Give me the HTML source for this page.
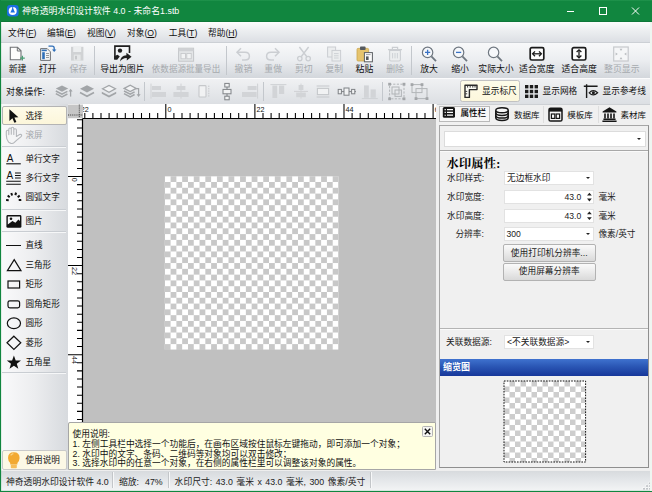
<!DOCTYPE html>
<html lang="zh-CN">
<head>
<meta charset="utf-8">
<title>神奇透明水印设计软件 4.0 - 未命名1.stb</title>
<style>
html,body{margin:0;padding:0;}
body{width:652px;height:492px;overflow:hidden;background:#f0f0f0;font-family:"Liberation Sans","Noto Sans CJK SC",sans-serif;color:#1a1a1a;position:relative;}
.abs{position:absolute;}
#win{position:absolute;left:0;top:0;width:652px;height:492px;overflow:hidden;background:#f0f0f0;}
#title{left:0;top:0;width:652px;height:22px;background:linear-gradient(#23964f 0,#11863f 1.5px,#11863f 20.5px,#0d7036 22px);}
#title .cap{left:22px;top:0;height:22px;line-height:22px;font-size:8.9px;color:#fff;white-space:nowrap;}
#menu{left:1px;top:22px;width:650px;height:20px;background:linear-gradient(#fcfcfc,#eceef0 45%,#dcdfe4);}
#menu span{position:absolute;top:0.7px;height:20px;line-height:21px;font-size:8.7px;white-space:nowrap;color:#111;}
#tb1{left:1px;top:42px;width:650px;height:36px;background:linear-gradient(#f8f9fa 0%,#ebedf0 50%,#d3d7dc 100%);border-top:1px solid #ccd0d5;box-sizing:border-box;}
#tb2{left:1px;top:78px;width:650px;height:26px;background:linear-gradient(#f0f1f3,#dcdfe3);border-top:1px solid #fbfbfc;box-sizing:border-box;}
.tl{position:absolute;top:64.4px;height:11px;line-height:11px;font-size:8.85px;white-space:nowrap;text-align:center;color:#111;transform:translateX(-50%);}
.tl.dis{color:#a6aaae;}
.tg{height:12px;line-height:12px;font-size:8.7px;white-space:nowrap;color:#111;}
.hl{left:3.6px;height:10px;line-height:10px;font-size:8.72px;white-space:nowrap;color:#111;}
.vsep{position:absolute;width:1px;background:#c3c7cc;}
#left{left:1px;top:104px;width:67px;height:366px;background:linear-gradient(90deg,#fafafb,#ecedef 50%,#d7dade);}
.li{position:absolute;left:25.4px;height:12px;line-height:12px;font-size:8.6px;white-space:nowrap;color:#111;}
.lsep{position:absolute;left:2px;width:64px;height:1px;background:#c9cdd2;border-bottom:1px solid #f6f7f8;}
#status{left:1px;top:470px;width:650px;height:21px;background:linear-gradient(#eeeeee 0,#eeeeee 1px,#d8dbde 1.5px,#e2e5e8 9px,#f2f3f4 20px);}
#status span{position:absolute;top:5.6px;height:12px;line-height:12px;font-size:8.8px;white-space:nowrap;color:#222;}
#status i{position:absolute;top:2px;width:1px;height:16px;background:#c3c6c9;border-right:1px solid #f7f8f9;}
#rp{left:439px;top:125px;width:210px;height:343px;box-sizing:border-box;border:1px solid #a6a6a6;border-right-color:#8f8f8f;border-bottom-color:#8f8f8f;background:#f0f0f0;}
.rl{position:absolute;height:12px;line-height:12px;font-size:8.7px;white-space:nowrap;color:#222;}
.inp{position:absolute;background:#fff;border:1px solid #e2e2e2;box-sizing:border-box;}
.btn{position:absolute;box-sizing:border-box;border:1px solid #b2b2b2;border-radius:2px;background:linear-gradient(#fafafa,#ececec 45%,#d9d9d9);font-size:8.7px;text-align:center;color:#222;white-space:nowrap;}
.arr{position:absolute;width:0;height:0;border-left:2.2px solid transparent;border-right:2.2px solid transparent;border-top:2.6px solid #222;}
</style>
</head>
<body>
<div id="win">

<!-- TITLE BAR -->
<div id="title" class="abs">
  <svg class="abs" style="left:7px;top:4.6px" width="12" height="12" viewBox="0 0 12 12"><rect x="0" y="0" width="11.6" height="11.6" rx="3" fill="#1d6fe3"/><circle cx="5.7" cy="6" r="4" fill="#fff"/><path d="M5.7 2.6 L3.4 7.4 L8 7.4 Z" fill="#1d6fe3"/><path d="M5.7 2 V5" stroke="#1d6fe3" stroke-width="0.9"/></svg>
  <div class="cap abs">神奇透明水印设计软件 4.0 - 未命名1.stb</div>
  <svg class="abs" style="left:560px;top:0" width="92" height="22" viewBox="0 0 92 22"><g stroke="#fff" stroke-width="1" fill="none"><path d="M7 11.5 H14"/><rect x="39.5" y="7.5" width="7" height="7"/><path d="M72 7.5 L79 14.5 M79 7.5 L72 14.5"/></g></svg>
</div>

<!-- MENU -->
<div id="menu" class="abs">
  <span style="left:7px">文件(<u>F</u>)</span>
  <span style="left:46px">编辑(<u>E</u>)</span>
  <span style="left:86px">视图(<u>V</u>)</span>
  <span style="left:126px">对象(<u>O</u>)</span>
  <span style="left:167.8px">工具(<u>T</u>)</span>
  <span style="left:207px">帮助(<u>H</u>)</span>
</div>

<!-- TOOLBAR 1 -->
<div id="tb1" class="abs"></div>
<!-- toolbar1 items (window coords) -->
<!-- 新建 -->
<svg class="abs" style="left:8px;top:44px" width="20" height="20" viewBox="0 0 20 20"><path d="M2.3 3.3 H9.5 L13 6.8 V15.7 H2.3 Z" fill="#fdfdfd" stroke="#6f7275" stroke-width="1.1"/><path d="M9.3 3.4 V7 H12.9" fill="none" stroke="#6f7275" stroke-width="1"/><path d="M14.4 11.8 V16.6 M12 14.2 H16.8" stroke="#4a9e74" stroke-width="1.2" fill="none"/></svg>
<div class="tl" style="left:17.5px">新建</div>
<!-- 打开 -->
<svg class="abs" style="left:38px;top:44px" width="20" height="20" viewBox="0 0 20 20"><path d="M2.6 4.6 H9.2 L12.4 7.8 V16.4 H2.6 Z" fill="#f4f5f6" stroke="#6f7275" stroke-width="1"/><rect x="3.6" y="5.6" width="5.2" height="1.6" fill="#2f6fb8"/><rect x="4.2" y="8.2" width="2.6" height="7" fill="#2f6fb8"/><path d="M8 9.5 H11 M8 11.5 H11 M8 13.5 H11" stroke="#8a8d90" stroke-width="0.9"/><path d="M10.5 2.2 H14.2 Q16.2 2.2 16.2 4.2 V6.2" fill="none" stroke="#2f6fb8" stroke-width="1.3"/><path d="M14 5.4 L16.2 8 L18.4 5.4 Z" fill="#2f6fb8"/></svg>
<div class="tl" style="left:47.5px">打开</div>
<!-- 保存 -->
<svg class="abs" style="left:68px;top:44px" width="20" height="20" viewBox="0 0 20 20"><rect x="3" y="2.8" width="12.4" height="13.8" fill="#d0d2d4"/><rect x="5.2" y="2.8" width="8" height="5.2" fill="#eceeef"/><rect x="5.8" y="10.6" width="6.8" height="6" fill="#e4e6e7"/><rect x="7" y="11.8" width="2" height="3.6" fill="#c6c8ca"/></svg>
<div class="tl dis" style="left:78.3px">保存</div>
<div class="vsep" style="left:94px;top:46px;height:29px"></div>
<!-- 导出为图片 -->
<svg class="abs" style="left:112px;top:43px" width="22" height="22" viewBox="0 0 22 22"><path d="M17.5 10 V3.1 H2.9 V16" fill="none" stroke="#1f1f1f" stroke-width="1.6"/><path d="M2.1 16.8 V13.2 L5.6 11.8 L7.8 13.6 L5.2 16.8 Z" fill="#1f1f1f"/><circle cx="8" cy="7.6" r="2.2" fill="#1f1f1f"/><path d="M8 18.6 Q8.6 12.4 14.4 12.2 V9.8 L19.6 13.8 L14.8 17.6 V15 Q10.6 14.8 8 18.6 Z" fill="#1f1f1f"/></svg>
<div class="tl" style="left:122.4px">导出为图片</div>
<!-- 依数据源批量导出 -->
<svg class="abs" style="left:176px;top:44px" width="20" height="20" viewBox="0 0 20 20"><rect x="2.6" y="4.2" width="15" height="13" fill="#e3e5e7" stroke="#c3c5c8" stroke-width="1"/><rect x="2.6" y="4.2" width="15" height="3" fill="#cfd1d4"/><rect x="5" y="9.4" width="4.4" height="5.4" fill="#f2f3f4" stroke="#c3c5c8" stroke-width="0.8"/><rect x="10.8" y="9.4" width="4.4" height="5.4" fill="#f2f3f4" stroke="#c3c5c8" stroke-width="0.8"/></svg>
<div class="tl dis" style="left:186px;font-size:8.55px">依数据源批量导出</div>
<div class="vsep" style="left:226px;top:46px;height:29px"></div>
<!-- 撤销 -->
<svg class="abs" style="left:233px;top:44px" width="20" height="20" viewBox="0 0 20 20"><path d="M4.2 8.2 H12 Q16.4 8.2 16.4 12.2 Q16.4 16 12 16 H9" fill="none" stroke="#cbced2" stroke-width="1.5"/><path d="M8 4.2 L4 8.2 L8 12.2" fill="none" stroke="#cbced2" stroke-width="1.5"/></svg>
<div class="tl dis" style="left:243.4px">撤销</div>
<!-- 重做 -->
<svg class="abs" style="left:263px;top:44px" width="20" height="20" viewBox="0 0 20 20"><path d="M15.8 8.2 H8 Q3.6 8.2 3.6 12.2 Q3.6 16 8 16 H11" fill="none" stroke="#cbced2" stroke-width="1.5"/><path d="M12 4.2 L16 8.2 L12 12.2" fill="none" stroke="#cbced2" stroke-width="1.5"/></svg>
<div class="tl dis" style="left:273.2px">重做</div>
<!-- 剪切 -->
<svg class="abs" style="left:294px;top:44px" width="20" height="20" viewBox="0 0 20 20"><path d="M5.4 3 L13 13 M14.6 3 L7 13" stroke="#cbced2" stroke-width="1.4" fill="none"/><circle cx="5.8" cy="14.6" r="2.2" fill="none" stroke="#cbced2" stroke-width="1.3"/><circle cx="14.2" cy="14.6" r="2.2" fill="none" stroke="#cbced2" stroke-width="1.3"/></svg>
<div class="tl dis" style="left:303.8px">剪切</div>
<!-- 复制 -->
<svg class="abs" style="left:324px;top:44px" width="20" height="20" viewBox="0 0 20 20"><rect x="3.6" y="3" width="8" height="10" fill="#eceeef" stroke="#cbced2" stroke-width="1"/><rect x="8" y="6.4" width="8.6" height="10.6" fill="#eceeef" stroke="#cbced2" stroke-width="1"/><path d="M10 9.6 H14.6 M10 11.8 H14.6 M10 14 H14.6" stroke="#cbced2" stroke-width="0.9"/></svg>
<div class="tl dis" style="left:334.3px">复制</div>
<!-- 粘贴 -->
<svg class="abs" style="left:354px;top:44px" width="20" height="20" viewBox="0 0 20 20"><rect x="3" y="4.4" width="11.6" height="12.6" rx="1" fill="#e6c46e" stroke="#c9a64e" stroke-width="0.8"/><rect x="6" y="2.6" width="5.6" height="3.4" rx="0.8" fill="#555a5f"/><rect x="10.4" y="8.6" width="8" height="9.2" fill="#fbfbfb" stroke="#5d6165" stroke-width="1"/><rect x="12" y="12.4" width="2.6" height="3.6" fill="#55595d"/><path d="M12 10.6 H16.6" stroke="#8a8d90" stroke-width="0.8"/></svg>
<div class="tl" style="left:364.4px">粘贴</div>
<!-- 删除 -->
<svg class="abs" style="left:385px;top:44px" width="20" height="20" viewBox="0 0 20 20"><path d="M4.6 6.4 H15.4 V15.6 Q15.4 17 14 17 H6 Q4.6 17 4.6 15.6 Z" fill="#eceeef" stroke="#cbced2" stroke-width="1.1"/><path d="M3 5.6 H17 M7.4 5.4 V3.4 H12.6 V5.4" fill="none" stroke="#cbced2" stroke-width="1.2"/><path d="M7.6 9 V14.4 M10 9 V14.4 M12.4 9 V14.4" stroke="#cbced2" stroke-width="0.9"/></svg>
<div class="tl dis" style="left:395px">删除</div>
<div class="vsep" style="left:411px;top:46px;height:29px"></div>
<!-- 放大 -->
<svg class="abs" style="left:419px;top:44px" width="20" height="20" viewBox="0 0 20 20"><circle cx="8.6" cy="8.4" r="5.2" fill="#f6f8fb" stroke="#6f7780" stroke-width="1.2"/><path d="M12.4 12.4 L17 17.2" stroke="#6f7780" stroke-width="1.8" fill="none"/><path d="M6 8.4 H11.2 M8.6 5.8 V11" stroke="#3a72c4" stroke-width="1.3" fill="none"/></svg>
<div class="tl" style="left:429px">放大</div>
<!-- 缩小 -->
<svg class="abs" style="left:450px;top:44px" width="20" height="20" viewBox="0 0 20 20"><circle cx="8.6" cy="8.4" r="5.2" fill="#f6f8fb" stroke="#6f7780" stroke-width="1.2"/><path d="M12.4 12.4 L17 17.2" stroke="#6f7780" stroke-width="1.8" fill="none"/><path d="M6 8.4 H11.2" stroke="#3a72c4" stroke-width="1.3" fill="none"/></svg>
<div class="tl" style="left:460px">缩小</div>
<!-- 实际大小 -->
<svg class="abs" style="left:485px;top:44px" width="20" height="20" viewBox="0 0 20 20"><circle cx="8.6" cy="8.4" r="5.2" fill="#f6f8fb" stroke="#6f7780" stroke-width="1.2"/><path d="M12.4 12.4 L17 17.2" stroke="#6f7780" stroke-width="1.8" fill="none"/></svg>
<div class="tl" style="left:496px">实际大小</div>
<!-- 适合宽度 -->
<svg class="abs" style="left:527px;top:44px" width="20" height="20" viewBox="0 0 20 20"><rect x="3.2" y="3.6" width="13.6" height="12.4" rx="1.6" fill="#fdfdfd" stroke="#1b1b1b" stroke-width="1.7"/><path d="M6 9.8 H14" stroke="#1b1b1b" stroke-width="1.3"/><path d="M8 7.4 L5.6 9.8 L8 12.2 M12 7.4 L14.4 9.8 L12 12.2" fill="none" stroke="#1b1b1b" stroke-width="1.3"/></svg>
<div class="tl" style="left:536.8px">适合宽度</div>
<!-- 适合高度 -->
<svg class="abs" style="left:569px;top:44px" width="20" height="20" viewBox="0 0 20 20"><rect x="3.2" y="3.6" width="13.6" height="12.4" rx="1.6" fill="#fdfdfd" stroke="#1b1b1b" stroke-width="1.7"/><path d="M10 6 V13.6" stroke="#1b1b1b" stroke-width="1.3"/><path d="M7.6 8 L10 5.8 L12.4 8 M7.6 11.6 L10 13.8 L12.4 11.6" fill="none" stroke="#1b1b1b" stroke-width="1.3"/></svg>
<div class="tl" style="left:579.2px">适合高度</div>
<!-- 整页显示 -->
<svg class="abs" style="left:612px;top:44px" width="20" height="20" viewBox="0 0 20 20"><rect x="1.7" y="3" width="14.5" height="14" fill="#f5f6f7" stroke="#c6c9cc" stroke-width="1.2"/><g fill="#b9bcc0"><path d="M7.6 4.8 H10.4 L9 7 Z"/><path d="M7.6 15.2 H10.4 L9 13 Z"/><path d="M3.6 8.6 V11.4 L5.8 10 Z"/><path d="M14.4 8.6 V11.4 L12.2 10 Z"/></g></svg>
<div class="tl dis" style="left:621.8px">整页显示</div>
<!-- TOOLBAR 2 -->
<div id="tb2" class="abs"></div>
<!-- toolbar2 items -->
<div class="abs" style="left:6px;top:86.4px;height:12px;line-height:12px;font-size:9px;letter-spacing:0.1px;white-space:nowrap;color:#111;">对象操作:</div>
<!-- layer icons -->
<svg class="abs" style="left:54px;top:82px" width="20" height="18" viewBox="0 0 20 18"><path d="M1.8 6.6 L8 3.4 L14.2 6.6 L8 9.8 Z" fill="#a2a5a8"/><path d="M1.8 9 L8 12.2 L13.4 9.4 M1.8 11.6 L8 14.8 L13.4 12" fill="none" stroke="#a2a5a8" stroke-width="1.5"/><path d="M16.6 14.6 V8.2" stroke="#a2a5a8" stroke-width="1.3" fill="none"/><path d="M14.6 9.6 L16.6 6.8 L18.6 9.6 Z" fill="#a2a5a8"/></svg>
<svg class="abs" style="left:77px;top:82px" width="20" height="18" viewBox="0 0 20 18"><path d="M3 6.8 L10 3.2 L17 6.8 L10 10.4 Z" fill="#a2a5a8"/><path d="M3 10.6 L10 14.2 L17 10.6" fill="none" stroke="#a2a5a8" stroke-width="1.7"/></svg>
<svg class="abs" style="left:99px;top:82px" width="20" height="18" viewBox="0 0 20 18"><path d="M3.6 6.8 L10 3.4 L16.4 6.8 L10 10.2 Z" fill="#f3f4f5" stroke="#a2a5a8" stroke-width="1.3"/><path d="M2.8 9.8 L10 13.4 L17.2 9.8 L17.2 11.8 L10 15.4 L2.8 11.8 Z" fill="#a2a5a8"/></svg>
<svg class="abs" style="left:122px;top:82px" width="20" height="18" viewBox="0 0 20 18"><path d="M2.2 6.4 L8.2 3.2 L14.2 6.4 L8.2 9.6 Z" fill="#f3f4f5" stroke="#a2a5a8" stroke-width="1.3"/><path d="M2 9 L8.2 12.2 L12.6 9.9 M2 11.6 L8.2 14.8 L12.6 12.5" fill="none" stroke="#a2a5a8" stroke-width="1.5"/><path d="M13.6 6.6 H16.6 V13" fill="none" stroke="#a2a5a8" stroke-width="1.2"/><path d="M14.6 12.2 L16.6 15 L18.6 12.2 Z" fill="#a2a5a8"/></svg>
<div class="vsep" style="left:144px;top:82px;height:19px"></div>
<!-- align icons -->
<svg class="abs" style="left:148px;top:82px" width="20" height="18" viewBox="0 0 20 18"><path d="M3 1.6 V16.6" stroke="#cfd1d4" stroke-width="1"/><rect x="4" y="4" width="9" height="4" fill="#d2d4d7"/><rect x="4" y="10" width="14" height="5" fill="#d2d4d7"/></svg>
<svg class="abs" style="left:171px;top:82px" width="20" height="18" viewBox="0 0 20 18"><path d="M10 1.6 V16.6" stroke="#cfd1d4" stroke-width="1"/><rect x="5.6" y="4" width="8.8" height="4" fill="#d2d4d7"/><rect x="2.4" y="10" width="15.2" height="5" fill="#d2d4d7"/></svg>
<svg class="abs" style="left:195px;top:82px" width="18" height="18" viewBox="0 0 18 18"><rect x="4" y="3.6" width="7" height="11.4" rx="0.8" fill="#f1f2f3" stroke="#c6c8cb" stroke-width="1.1"/><path d="M13.8 3.6 V15" stroke="#c6c8cb" stroke-width="1" stroke-dasharray="1.4 1"/></svg>
<svg class="abs" style="left:219px;top:82px" width="16" height="19" viewBox="0 0 16 19"><path d="M8 1.5 V17.5" stroke="#7f8286" stroke-width="1"/><rect x="5.8" y="1.4" width="4.4" height="3.6" fill="#f1f2f3" stroke="#7f8286" stroke-width="1"/><rect x="4" y="7.4" width="8" height="4.4" fill="#f1f2f3" stroke="#7f8286" stroke-width="1"/><rect x="5.8" y="14.2" width="4.4" height="3.6" fill="#f1f2f3" stroke="#7f8286" stroke-width="1"/></svg>
<svg class="abs" style="left:240px;top:82px" width="20" height="18" viewBox="0 0 20 18"><path d="M17.6 1.6 V16.6" stroke="#cfd1d4" stroke-width="1"/><rect x="7.6" y="4" width="9" height="4" fill="#d2d4d7"/><rect x="2" y="10" width="14.6" height="5" fill="#d2d4d7"/></svg>
<div class="vsep" style="left:263px;top:82px;height:19px"></div>
<svg class="abs" style="left:268px;top:82px" width="20" height="18" viewBox="0 0 20 18"><path d="M2.4 2.6 H18.4" stroke="#cfd1d4" stroke-width="1"/><rect x="4.4" y="3.6" width="4.8" height="12.4" fill="#d2d4d7"/><rect x="11" y="3.6" width="5.2" height="8.4" fill="#d2d4d7"/></svg>
<svg class="abs" style="left:291px;top:82px" width="20" height="18" viewBox="0 0 20 18"><path d="M3 9.4 H17" stroke="#cfd1d4" stroke-width="1"/><rect x="7.6" y="3" width="4.8" height="5" fill="#d2d4d7"/><rect x="5.2" y="10.6" width="9.6" height="4.6" fill="#d2d4d7"/><path d="M10 1.6 V16.6" stroke="#d2d4d7" stroke-width="1"/></svg>
<svg class="abs" style="left:314px;top:82px" width="18" height="18" viewBox="0 0 18 18"><path d="M2.6 4 H15.4 M2.6 15 H15.4" stroke="#c6c8cb" stroke-width="1.1"/><rect x="3.4" y="6.4" width="11.2" height="6.2" fill="#f1f2f3" stroke="#c6c8cb" stroke-width="1.1"/></svg>
<svg class="abs" style="left:336px;top:84px" width="22" height="14" viewBox="0 0 22 14"><path d="M2 7.6 H20" stroke="#7f8286" stroke-width="1"/><rect x="2.2" y="5.4" width="3.2" height="4.4" fill="#f1f2f3" stroke="#7f8286" stroke-width="1"/><rect x="8" y="4" width="5" height="7.2" fill="#f1f2f3" stroke="#7f8286" stroke-width="1"/><rect x="15.6" y="5.4" width="3.2" height="4.4" fill="#f1f2f3" stroke="#7f8286" stroke-width="1"/></svg>
<svg class="abs" style="left:360px;top:82px" width="20" height="18" viewBox="0 0 20 18"><path d="M1.8 16.6 H17.8" stroke="#cfd1d4" stroke-width="1"/><rect x="4" y="3.4" width="4.8" height="12.4" fill="#d2d4d7"/><rect x="10.6" y="7.4" width="5.2" height="8.4" fill="#d2d4d7"/></svg>
<div class="vsep" style="left:382px;top:82px;height:19px"></div>
<svg class="abs" style="left:387px;top:82px" width="20" height="19" viewBox="0 0 20 19"><rect x="2.6" y="2.2" width="14.4" height="14.6" fill="none" stroke="#b2b5b8" stroke-width="1" stroke-dasharray="2.2 1.4"/><rect x="5" y="5" width="7" height="7" fill="none" stroke="#b2b5b8" stroke-width="1"/><rect x="8" y="8" width="6.4" height="6.4" fill="none" stroke="#b2b5b8" stroke-width="1"/><g fill="#a3a6a9"><rect x="1.2" y="0.8" width="2.8" height="2.8"/><rect x="15.6" y="0.8" width="2.8" height="2.8"/><rect x="1.2" y="15.4" width="2.8" height="2.8"/><rect x="15.6" y="15.4" width="2.8" height="2.8"/></g></svg>
<svg class="abs" style="left:409px;top:82px" width="21" height="19" viewBox="0 0 21 19"><rect x="3" y="2.6" width="10" height="8" fill="none" stroke="#b2b5b8" stroke-width="1"/><rect x="7" y="6.6" width="11" height="10" fill="none" stroke="#b2b5b8" stroke-width="1"/><g fill="#a3a6a9"><rect x="1.6" y="1.2" width="2.8" height="2.8"/><rect x="11.6" y="1.2" width="2.8" height="2.8"/><rect x="5.6" y="15.2" width="2.8" height="2.8"/><rect x="16.6" y="15.2" width="2.8" height="2.8"/></g></svg>
<!-- view toggles -->
<div class="abs" style="left:460px;top:79.8px;width:60px;height:22.6px;box-sizing:border-box;border:1px solid #c2c2c2;border-radius:2.5px;background:linear-gradient(#fefce9,#fcf7dc);"></div>
<svg class="abs" style="left:463.4px;top:83px" width="16" height="16" viewBox="0 0 16 16"><path d="M2 2.2 H14 V6.6 H6.4 V14.4 H2 Z" fill="#fbfbf4" stroke="#2a2a2a" stroke-width="1.4" stroke-linejoin="round"/><path d="M4.6 2.6 V4.6 M7.2 2.6 V4.6 M9.8 2.6 V4.6 M12 2.6 V4.6 M2.4 8.4 H4.2 M2.4 10.8 H4.2" stroke="#2a2a2a" stroke-width="0.9"/></svg>
<div class="abs tg" style="left:482px;top:84.8px;">显示标尺</div>
<svg class="abs" style="left:524px;top:83.8px" width="15" height="15" viewBox="0 0 15 15"><g fill="#1b1b1b"><rect x="1" y="1" width="3.4" height="3.4"/><rect x="5.8" y="1" width="3.4" height="3.4"/><rect x="10.6" y="1" width="3.4" height="3.4"/><rect x="1" y="5.8" width="3.4" height="3.4"/><rect x="5.8" y="5.8" width="3.4" height="3.4"/><rect x="10.6" y="5.8" width="3.4" height="3.4"/><rect x="1" y="10.6" width="3.4" height="3.4"/><rect x="5.8" y="10.6" width="3.4" height="3.4"/><rect x="10.6" y="10.6" width="3.4" height="3.4"/></g></svg>
<div class="abs tg" style="left:542.5px;top:84.8px;">显示网格</div>
<svg class="abs" style="left:583px;top:82.8px" width="16" height="17" viewBox="0 0 16 17"><path d="M0.8 3.2 H14.6 M3.6 1.2 V15" stroke="#1b1b1b" stroke-width="1.4" fill="none"/><path d="M6.2 9.8 Q10.2 5.6 14.6 9.8 Q10.2 14 6.2 9.8 Z" fill="none" stroke="#1b1b1b" stroke-width="1.2"/><circle cx="10.4" cy="9.8" r="1.5" fill="#1b1b1b"/></svg>
<div class="abs tg" style="left:602.5px;top:84.8px;">显示参考线</div>

<!-- LEFT PANEL -->
<div id="left" class="abs"></div>
<!-- left items (window coords) -->
<div class="abs" style="left:2px;top:105.6px;width:65px;height:19.6px;box-sizing:border-box;border:1px solid #b4b4b4;border-radius:2px;background:linear-gradient(#fefbe9,#fcf6da);"></div>
<div class="li" style="top:109.5px;color:#111">选择</div>
<div class="li" style="top:129.3px;color:#a3a6aa">滚屏</div>
<div class="li" style="top:152.7px;color:#111">单行文字</div>
<div class="li" style="top:171.7px;color:#111">多行文字</div>
<div class="li" style="top:191.4px;color:#111">圆弧文字</div>
<div class="li" style="top:214.9px;color:#111">图片</div>
<div class="li" style="top:239.2px;color:#111">直线</div>
<div class="li" style="top:259.0px;color:#111">三角形</div>
<div class="li" style="top:278.2px;color:#111">矩形</div>
<div class="li" style="top:297.8px;color:#111">圆角矩形</div>
<div class="li" style="top:316.9px;color:#111">圆形</div>
<div class="li" style="top:336.5px;color:#111">菱形</div>
<div class="li" style="top:356.0px;color:#111">五角星</div>
<div class="lsep" style="top:145.5px"></div>
<div class="lsep" style="top:208.5px"></div>
<div class="lsep" style="top:231.0px"></div>
<div class="lsep" style="top:371.6px"></div>
<svg class="abs" style="left:8px;top:108px" width="12" height="16" viewBox="0 0 12 16"><path d="M1.4 1.2 L1.4 13 L4.4 10.2 L6.4 14.8 L8.4 13.9 L6.4 9.5 L10.4 9.3 Z" fill="#111"/></svg>
<svg class="abs" style="left:5px;top:126px" width="18" height="19" viewBox="0 0 18 19"><path d="M3.6 16.2 Q1.2 13 1.3 9 V5.6 Q1.4 4.2 2.6 4.2 Q3.8 4.2 3.8 5.6 V8.6 V3.4 Q3.8 2 5 2 Q6.3 2 6.3 3.4 V8.2 V2.6 Q6.3 1.3 7.5 1.3 Q8.8 1.3 8.8 2.6 V8.4 V4 Q8.8 2.8 10.1 2.8 Q11.4 2.8 11.4 4 V10.4 L14.6 8.6 Q16 7.9 16.6 9 Q17 10 15.8 10.9 Q11 14.6 9.4 16.4 Q8 17.8 6 17.4 Q4.4 17 3.6 16.2 Z" fill="#f4f5f6" stroke="#b4b7bb" stroke-width="1.1" stroke-linejoin="round"/></svg>
<svg class="abs" style="left:5px;top:152px" width="18" height="14" viewBox="0 0 18 14"><text x="1.8" y="9.6" font-family="Liberation Sans, sans-serif" font-size="10" fill="#111">A</text><path d="M1.2 11.8 H15.8" stroke="#111" stroke-width="1.1"/></svg>
<svg class="abs" style="left:5px;top:169px" width="18" height="17" viewBox="0 0 18 17"><text x="1.6" y="10" font-family="Liberation Sans, sans-serif" font-size="10" fill="#111">A</text><path d="M10 4 H15.8 M10 6.5 H15.8 M10 9 H15.8 M1.2 12.3 H15.8 M1.2 15.2 H15.8" stroke="#111" stroke-width="1.1"/></svg>
<svg class="abs" style="left:5px;top:190px" width="18" height="13" viewBox="0 0 18 13"><path d="M3.70 10.28 L1.10 10.12 M4.69 7.15 L2.71 5.45 M7.09 5.44 L6.31 2.96 M10.33 5.15 L11.07 2.65 M12.71 7.15 L14.69 5.45 M13.71 10.12 L16.29 9.88" stroke="#111" stroke-width="2" fill="none"/></svg>
<svg class="abs" style="left:5px;top:213px" width="18" height="16" viewBox="0 0 18 16"><rect x="1.4" y="2" width="15" height="12.8" rx="1.4" fill="#111"/><path d="M2.8 3.4 H15 V8 L13.4 6.6 L10.4 9.8 L7.4 8 L2.8 11.4 Z" fill="#f4f5f6"/><circle cx="6" cy="5.8" r="1.3" fill="#111"/></svg>
<div class="abs" style="left:6px;top:245px;width:15px;height:1.2px;background:#111"></div>
<svg class="abs" style="left:5px;top:257px" width="18" height="16" viewBox="0 0 18 16"><path d="M9.2 2.6 L16 13.6 H2.4 Z" fill="none" stroke="#111" stroke-width="1.2"/></svg>
<svg class="abs" style="left:5px;top:278px" width="18" height="13" viewBox="0 0 18 13"><rect x="3" y="3" width="11.6" height="7" fill="none" stroke="#111" stroke-width="1.2"/></svg>
<svg class="abs" style="left:5px;top:298px" width="18" height="13" viewBox="0 0 18 13"><rect x="3" y="2.8" width="11.6" height="7" rx="1.8" fill="none" stroke="#111" stroke-width="1.2"/></svg>
<svg class="abs" style="left:5px;top:316px" width="18" height="15" viewBox="0 0 18 15"><ellipse cx="8.9" cy="7.3" rx="6.6" ry="5.4" fill="none" stroke="#111" stroke-width="1.2"/></svg>
<svg class="abs" style="left:5px;top:334px" width="18" height="18" viewBox="0 0 18 18"><path d="M8.9 2.2 L15.8 8.8 L8.9 15.4 L2 8.8 Z" fill="none" stroke="#111" stroke-width="1.2"/></svg>
<svg class="abs" style="left:5px;top:354px" width="18" height="16" viewBox="0 0 18 16"><path d="M8.9 1.4 L10.7 6.4 L16 6.5 L11.8 9.7 L13.3 14.8 L8.9 11.8 L4.5 14.8 L6 9.7 L1.8 6.5 L7.1 6.4 Z" fill="#111"/></svg>
<!-- 使用说明 -->
<div class="abs" style="left:2px;top:450px;width:65px;height:19.6px;box-sizing:border-box;border:1px solid #c9c9c9;border-radius:2px;background:#fcf8e6;"></div>
<svg class="abs" style="left:6px;top:451px" width="16" height="19" viewBox="0 0 16 19"><path d="M7.8 1.2 Q13.6 1.2 13.6 7 Q13.6 9.6 11.4 12 V13.6 H4.2 V12 Q2 9.6 2 7 Q2 1.2 7.8 1.2 Z" fill="#f2a932"/><rect x="4.8" y="13.6" width="6" height="3.6" rx="0.8" fill="#f6bd5a"/><path d="M4.6 4.4 Q5.6 2.8 7.4 2.6" stroke="#f9d48a" stroke-width="1.2" fill="none"/></svg>
<div class="li" style="left:25.5px;top:453.8px">使用说明</div>

<!-- CANVAS -->
<svg class="abs" style="left:68px;top:104px" width="368.4" height="318" viewBox="0 0 368.4 318"><defs><pattern id="chk" x="96.80" y="72.20" width="11.58" height="11.58" patternUnits="userSpaceOnUse"><rect width="11.58" height="11.58" fill="#fff"/><rect x="5.79" y="0" width="5.79" height="5.79" fill="#c8c8c8"/><rect x="0" y="5.79" width="5.79" height="5.79" fill="#c8c8c8"/></pattern></defs><rect x="0" y="0" width="369" height="318" fill="#c0c0c0"/><rect x="96.8" y="72.2" width="173.7" height="173.4" fill="url(#chk)"/><rect x="0" y="0" width="369" height="14.5" fill="#fff"/><rect x="0" y="0" width="14.5" height="318" fill="#fff"/><g font-family="Liberation Sans, sans-serif" font-size="7.2" fill="#111"><text x="10.3" y="8.2">-22</text><text x="99.4" y="8.2">0</text><text x="188.5" y="8.2">22</text><text x="277.6" y="8.2">44</text><text x="366.7" y="8.2">66</text><text transform="translate(3.6 73.8) rotate(90)">0</text><text transform="translate(3.6 162.9) rotate(90)">22</text><text transform="translate(3.6 252.0) rotate(90)">44</text></g><path d="M16.80 9.00 V14.50 M24.90 9.00 V14.50 M33.00 9.00 V14.50 M41.10 9.00 V14.50 M49.20 9.00 V14.50 M57.30 9.00 V14.50 M65.40 9.00 V14.50 M73.50 9.00 V14.50 M81.60 9.00 V14.50 M89.70 9.00 V14.50 M97.80 0.00 V14.50 M105.90 9.00 V14.50 M114.00 9.00 V14.50 M122.10 9.00 V14.50 M130.20 9.00 V14.50 M138.30 9.00 V14.50 M146.40 9.00 V14.50 M154.50 9.00 V14.50 M162.60 9.00 V14.50 M170.70 9.00 V14.50 M178.80 9.00 V14.50 M186.90 0.00 V14.50 M195.00 9.00 V14.50 M203.10 9.00 V14.50 M211.20 9.00 V14.50 M219.30 9.00 V14.50 M227.40 9.00 V14.50 M235.50 9.00 V14.50 M243.60 9.00 V14.50 M251.70 9.00 V14.50 M259.80 9.00 V14.50 M267.90 9.00 V14.50 M276.00 0.00 V14.50 M284.10 9.00 V14.50 M292.20 9.00 V14.50 M300.30 9.00 V14.50 M308.40 9.00 V14.50 M316.50 9.00 V14.50 M324.60 9.00 V14.50 M332.70 9.00 V14.50 M340.80 9.00 V14.50 M348.90 9.00 V14.50 M357.00 9.00 V14.50 M365.10 0.00 V14.50 M9.00 15.80 H14.50 M9.00 23.90 H14.50 M9.00 32.00 H14.50 M9.00 40.10 H14.50 M9.00 48.20 H14.50 M9.00 56.30 H14.50 M9.00 64.40 H14.50 M0.00 72.50 H14.50 M9.00 80.60 H14.50 M9.00 88.70 H14.50 M9.00 96.80 H14.50 M9.00 104.90 H14.50 M9.00 113.00 H14.50 M9.00 121.10 H14.50 M9.00 129.20 H14.50 M9.00 137.30 H14.50 M9.00 145.40 H14.50 M9.00 153.50 H14.50 M0.00 161.60 H14.50 M9.00 169.70 H14.50 M9.00 177.80 H14.50 M9.00 185.90 H14.50 M9.00 194.00 H14.50 M9.00 202.10 H14.50 M9.00 210.20 H14.50 M9.00 218.30 H14.50 M9.00 226.40 H14.50 M9.00 234.50 H14.50 M9.00 242.60 H14.50 M0.00 250.70 H14.50 M9.00 258.80 H14.50 M9.00 266.90 H14.50 M9.00 275.00 H14.50 M9.00 283.10 H14.50 M9.00 291.20 H14.50 M9.00 299.30 H14.50 M9.00 307.40 H14.50 M9.00 315.50 H14.50" stroke="#000" stroke-width="1.05" fill="none"/><path d="M14.5 14.5 H369 M14.5 14.5 V318" stroke="#000" stroke-width="1.2" fill="none"/><rect x="0" y="0.6" width="15" height="13.6" fill="#c6c6c6"/><path d="M11.3 0.6 V14 M0 11 H14.6" stroke="#333" stroke-width="0.9" stroke-dasharray="1 0.9" fill="none"/></svg>

<!-- HELP -->
<div id="help" class="abs" style="left:68px;top:421.5px;width:368px;height:48.8px;box-sizing:border-box;background:#ffffe1;border:1px solid #a6a6a6;border-radius:2px 0 0 0;">
  <div class="abs hl" style="top:6.5px">使用说明:</div>
  <div class="abs hl" style="top:16.3px">1. 左侧工具栏中选择一个功能后，在画布区域按住鼠标左键拖动，即可添加一个对象；</div>
  <div class="abs hl" style="top:26.1px">2. 水印中的文字、条码、二维码等对象均可以双击修改；</div>
  <div class="abs hl" style="top:35.9px">3. 选择水印中的任意一个对象，在右侧的属性栏里可以调整该对象的属性。</div>
  <div class="abs" style="left:353px;top:3px;width:11px;height:11px;box-sizing:border-box;border:1px solid #b5b5b5;border-radius:1.5px;background:#f6f6f2;"></div>
  <svg class="abs" style="left:353px;top:3px" width="11" height="11" viewBox="0 0 11 11"><path d="M2.8 2.8 L8.2 8.2 M8.2 2.8 L2.8 8.2" stroke="#111" stroke-width="1.4" fill="none"/></svg>
</div>

<!-- RIGHT PANEL -->
<!-- tabs -->
<div class="abs" style="left:437px;top:104px;width:213px;height:1px;background:#cdd0d4;"></div>
<div class="abs" style="left:439px;top:105.6px;width:51px;height:16px;box-sizing:border-box;border:1px solid #b9b9b9;background:#f7f7f7;"></div>
<svg class="abs" style="left:442px;top:106px" width="14" height="13" viewBox="0 0 14 13"><rect x="0.8" y="1" width="12.2" height="10.8" rx="1.6" fill="#161616"/><path d="M5 3.6 H11 M5 6.4 H11 M5 9.2 H11" stroke="#fff" stroke-width="1.3"/><path d="M2.6 3.6 H3.8 M2.6 6.4 H3.8 M2.6 9.2 H3.8" stroke="#fff" stroke-width="1.1"/></svg>
<div class="rl" style="left:460.4px;top:107.4px;font-weight:500;font-size:8.6px;color:#000">属性栏</div>
<svg class="abs" style="left:494px;top:106px" width="16" height="16" viewBox="0 0 16 16"><path d="M1.8 4.2 V11.8 Q1.8 14.4 8 14.4 Q14.2 14.4 14.2 11.8 V4.2" fill="#f6f6f6" stroke="#161616" stroke-width="1.5"/><ellipse cx="8" cy="4.2" rx="6.2" ry="2.5" fill="#f6f6f6" stroke="#161616" stroke-width="1.5"/><path d="M1.8 6.8 Q1.8 9.4 8 9.4 Q14.2 9.4 14.2 6.8 M1.8 9.4 Q1.8 12 8 12 Q14.2 12 14.2 9.4" fill="none" stroke="#161616" stroke-width="1.5"/></svg>
<div class="rl" style="left:514px;top:109.2px;font-size:8.5px;color:#111">数据库</div>
<svg class="abs" style="left:547px;top:106px" width="17" height="17" viewBox="0 0 17 17"><rect x="2" y="2.2" width="13" height="12.8" rx="1.6" fill="#f6f6f6" stroke="#161616" stroke-width="1.5"/><rect x="2" y="2.2" width="13" height="3.4" fill="#161616"/><rect x="4.4" y="8" width="3.4" height="4.4" fill="none" stroke="#161616" stroke-width="1.2"/><rect x="9.2" y="8" width="3.4" height="4.4" fill="none" stroke="#161616" stroke-width="1.2"/></svg>
<div class="rl" style="left:567.3px;top:109.2px;font-size:8.5px;color:#111">模板库</div>
<svg class="abs" style="left:601px;top:106px" width="17" height="17" viewBox="0 0 17 17"><path d="M8.5 1.2 L15.4 5.4 V6.6 H1.6 V5.4 Z" fill="#161616"/><path d="M4 7.4 V12.4 M7 7.4 V12.4 M10 7.4 V12.4 M13 7.4 V12.4" stroke="#161616" stroke-width="1.6"/><path d="M2.4 13.2 H14.6 M1.4 15.2 H15.6" stroke="#161616" stroke-width="1.4"/></svg>
<div class="rl" style="left:620.5px;top:109.2px;font-size:8.5px;color:#111">素材库</div>

<div class="abs" style="left:543px;top:106px;width:1px;height:17px;background:#dedede;"></div>
<div class="abs" style="left:598px;top:106px;width:1px;height:17px;background:#dedede;"></div>
<!-- panel -->
<div id="rp" class="abs">
  <!-- object selector -->
  <div class="inp" style="left:4px;top:5px;width:202px;height:16px;border-color:#dcdcdc;"></div>
  <div class="arr" style="left:196.6px;top:12px"></div>
  <div class="abs" style="left:0;top:24px;width:208px;height:1px;background:#a8a8a8;"></div>
  <div class="abs" style="left:0;top:25px;width:208px;height:1px;background:#fafafa;"></div>
  <div class="rl" style="left:6.6px;top:31.8px;font-size:12.2px;font-weight:bold;color:#000;font-family:'Liberation Serif','Noto Serif CJK SC',serif;letter-spacing:0.2px;">水印属性:</div>
  <div class="rl" style="left:7px;top:46.4px">水印样式:</div>
  <div class="rl" style="left:7px;top:65.3px">水印宽度:</div>
  <div class="rl" style="left:7px;top:84.1px">水印高度:</div>
  <div class="rl" style="left:15.4px;top:101.8px">分辨率:</div>
  <div class="inp" style="left:64px;top:45px;width:90.4px;height:14.2px"></div>
  <div class="rl" style="left:67px;top:46.2px">无边框水印</div>
  <div class="arr" style="left:146px;top:51.2px"></div>
  <div class="inp" style="left:64px;top:64px;width:90.4px;height:14.2px"></div>
  <div class="rl" style="left:124.5px;top:65.2px;font-size:8.6px">43.0</div>
  <div class="inp" style="left:64px;top:82.5px;width:90.4px;height:14.2px"></div>
  <div class="rl" style="left:124.5px;top:83.8px;font-size:8.6px">43.0</div>
  <div class="inp" style="left:64px;top:101px;width:90.4px;height:14.2px"></div>
  <div class="rl" style="left:66.4px;top:102px;font-size:8.6px">300</div>
  <div class="arr" style="left:146px;top:107.4px"></div>
  <svg class="abs" style="left:145.6px;top:66px" width="7" height="30" viewBox="0 0 7 30"><path d="M1 3.6 L3.4 0.8 L5.8 3.6 Z M1 6.6 L3.4 9.4 L5.8 6.6 Z M1 22.2 L3.4 19.4 L5.8 22.2 Z M1 25.2 L3.4 28 L5.8 25.2 Z" fill="#222"/></svg>
  <div class="rl" style="left:158.4px;top:65.4px">毫米</div>
  <div class="rl" style="left:158.4px;top:84px">毫米</div>
  <div class="rl" style="left:158.4px;top:102px">像素/英寸</div>
  <div class="btn" style="left:62.8px;top:117.6px;width:92.8px;height:18px;line-height:16.5px;">使用打印机分辨率...</div>
  <div class="btn" style="left:62.8px;top:137.4px;width:92.8px;height:17.4px;line-height:15.8px;">使用屏幕分辨率</div>
  <div class="abs" style="left:0;top:202px;width:208px;height:1px;background:#b4b4b4;"></div>
  <div class="abs" style="left:0;top:203px;width:208px;height:1px;background:#fafafa;"></div>
  <div class="rl" style="left:6px;top:210px">关联数据源:</div>
  <div class="inp" style="left:64px;top:209px;width:90.4px;height:14px"></div>
  <div class="rl" style="left:67px;top:210px">&lt;不关联数据源&gt;</div>
  <div class="arr" style="left:146px;top:215.2px"></div>
  <!-- thumbnail header -->
  <div class="abs" style="left:0;top:233px;width:208px;height:17px;background:linear-gradient(#3f72cf,#2a56b4 45%,#17379a);"></div>
  <div class="rl" style="left:3px;top:235.4px;color:#fff;font-weight:bold;font-size:9px;">缩览图</div>
  <svg class="abs" style="left:62.6px;top:254px" width="84" height="84" viewBox="0 0 84 84"><defs><pattern id="chk2" x="1" y="1" width="11" height="11" patternUnits="userSpaceOnUse"><rect width="11" height="11" fill="#fff"/><rect x="5.5" y="0" width="5.5" height="5.5" fill="#cdcdcd"/><rect x="0" y="5.5" width="5.5" height="5.5" fill="#cdcdcd"/></pattern></defs><rect x="1" y="1" width="81.6" height="81" fill="url(#chk2)"/><rect x="1" y="1" width="81.6" height="81" fill="none" stroke="#111" stroke-width="1" stroke-dasharray="1.6 1.2"/></svg>
</div>

<!-- STATUS -->
<div id="status" class="abs">
  <span style="left:5px">神奇透明水印设计软件 4.0</span>
  <span style="left:118px;word-spacing:3.6px">缩放: 47%</span>
  <span style="left:173.6px;word-spacing:1.05px">水印尺寸: 43.0 毫米 x 43.0 毫米, 300 像素/英寸</span>
  <i style="left:111px"></i><i style="left:167px"></i><i style="left:368.5px"></i>
</div>

<svg class="abs" style="left:641px;top:480px" width="11" height="11" viewBox="0 0 11 11"><g fill="#fff"><rect x="7.6" y="1.8" width="1.6" height="1.6"/><rect x="4.6" y="4.6" width="1.6" height="1.6"/><rect x="7.6" y="4.6" width="1.6" height="1.6"/><rect x="1.6" y="7.4" width="1.6" height="1.6"/><rect x="4.6" y="7.4" width="1.6" height="1.6"/><rect x="7.6" y="7.4" width="1.6" height="1.6"/></g><g fill="#b4b8bc"><rect x="8.2" y="2.4" width="1.6" height="1.6"/><rect x="5.2" y="5.2" width="1.6" height="1.6"/><rect x="8.2" y="5.2" width="1.6" height="1.6"/><rect x="2.2" y="8" width="1.6" height="1.6"/><rect x="5.2" y="8" width="1.6" height="1.6"/><rect x="8.2" y="8" width="1.6" height="1.6"/></g></svg>
<!-- window borders -->
<div class="abs" style="left:0;top:0;width:1px;height:492px;background:#11863f;"></div>
<div class="abs" style="left:1px;top:22px;width:1px;height:469px;background:rgba(17,134,63,0.10);"></div>
<div class="abs" style="left:0;top:491px;width:652px;height:1px;background:#11863f;"></div>
<div class="abs" style="left:0;top:490px;width:652px;height:1px;background:rgba(17,134,63,0.12);"></div>
<div class="abs" style="left:650px;top:22px;width:2px;height:469px;background:#eef6f1;"></div>
</div>
</body>
</html>
